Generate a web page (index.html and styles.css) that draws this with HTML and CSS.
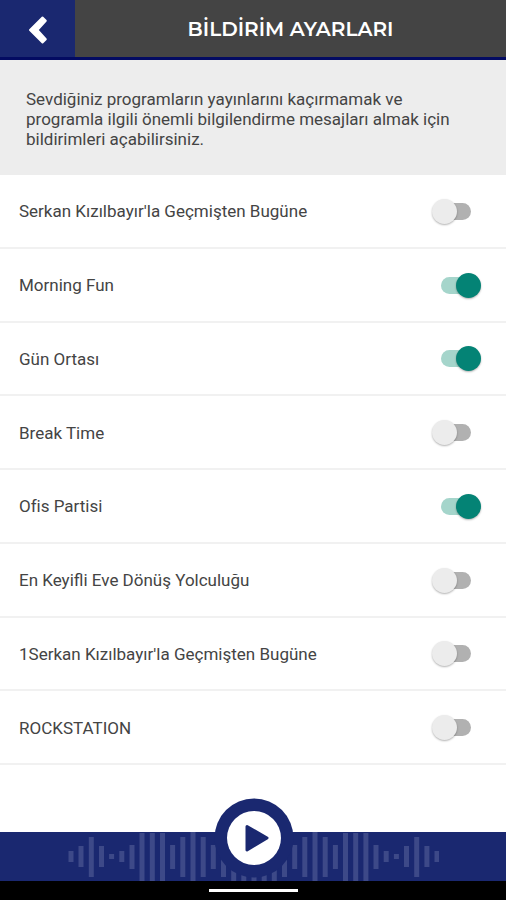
FILE: index.html
```html
<!DOCTYPE html>
<html lang="tr">
<head>
<meta charset="utf-8">
<meta name="viewport" content="width=device-width, initial-scale=1">
<title>Bildirim Ayarları</title>
<link rel="stylesheet" href="styles.css">
</head>
<body>
<div class="app">
  <header class="header">
    <button class="back" type="button" aria-label="Geri">
      <svg width="20" height="30" viewBox="0 0 20 30" aria-hidden="true"><path d="M14.500 2.500L17.800 5.800L9.400 15L17.800 24.200L14.500 27.500L2 15Z" fill="#fff" stroke="#fff" stroke-width="2" stroke-linejoin="round"/></svg>
    </button>
    <h1 class="title">BİLDİRİM AYARLARI</h1>
  </header>
  <main class="content">
    <p class="intro">Sevdiğiniz programların yayınlarını kaçırmamak ve programla ilgili önemli bilgilendirme mesajları almak için bildirimleri açabilirsiniz.</p>
    <ul class="list">
      <li class="row"><label class="name" for="p1">Serkan Kızılbayır'la Geçmişten Bugüne</label><input class="switch" type="checkbox" id="p1"></li>
      <li class="row"><label class="name" for="p2">Morning Fun</label><input class="switch" type="checkbox" id="p2" checked></li>
      <li class="row"><label class="name" for="p3">Gün Ortası</label><input class="switch" type="checkbox" id="p3" checked></li>
      <li class="row"><label class="name" for="p4">Break Time</label><input class="switch" type="checkbox" id="p4"></li>
      <li class="row"><label class="name" for="p5">Ofis Partisi</label><input class="switch" type="checkbox" id="p5" checked></li>
      <li class="row"><label class="name" for="p6">En Keyifli Eve Dönüş Yolculuğu</label><input class="switch" type="checkbox" id="p6"></li>
      <li class="row"><label class="name" for="p7">1Serkan Kızılbayır'la Geçmişten Bugüne</label><input class="switch" type="checkbox" id="p7"></li>
      <li class="row"><label class="name" for="p8">ROCKSTATION</label><input class="switch" type="checkbox" id="p8"></li>
    </ul>
  </main>
  <footer class="player">
    <svg class="wave" width="372" height="49" viewBox="67 832 372 49" aria-hidden="true">
      <path fill="none" stroke="#3d4988" stroke-width="5" d="M71 851v11M81 846v21M91.300 837v40M101.500 846v21M111.600 854v5M121.800 851v11M132 845v24M142 833v48M152.300 833v48M162.500 833v48M172.600 845v24M182.800 837v40M193 832v49M203.200 837v40M213.300 845v24M223.500 837v40M233.700 832v49M243.800 832v49M254 832v49M264.200 832v49M274.300 832v49M284.500 837v40M294.700 845v24M304.800 837v40M315 832v49M325.200 837v40M335.400 845v24M345.500 833v48M355.700 833v48M365.900 833v48M376 845v24M386.200 851v11M396.400 854v5M406.500 846v21M416.700 837v40M426.900 846v21M437 851v11"/>
    </svg>
    <button class="play" type="button" aria-label="Oynat">
      <svg width="80" height="80" viewBox="0 0 80 80" aria-hidden="true"><circle cx="40" cy="40" r="39.500" fill="#1a2870"/><circle cx="40" cy="40" r="27" fill="#fff"/><path d="M33 28.500L53 40L33 52Z" fill="#1a2870" stroke="#1a2870" stroke-width="3" stroke-linejoin="round"/></svg>
    </button>
  </footer>
  <div class="system"><span class="handle"></span></div>
</div>
</body>
</html>
```
FILE: styles.css
```css
* {
  box-sizing: border-box;
}

body {
  margin: 0;
  background: #fff;
  color: #444;
  font-family: Roboto, "Liberation Sans", sans-serif;
}

button {
  padding: 0;
  border: 0;
  background: none;
  cursor: pointer;
}

svg {
  display: block;
}

.app {
  display: flex;
  flex-direction: column;
  min-height: 100vh;
}

.header {
  display: flex;
  height: 60px;
  background: #444;
  border-bottom: 3px solid #030b62;
}

.back {
  display: flex;
  align-items: center;
  justify-content: center;
  width: 75px;
  padding-top: 3px;
  background: #1a2870;
}

.title {
  flex: 1;
  margin: 0;
  color: #fff;
  font: 600 20px/58px Montserrat, Inter, sans-serif;
  text-align: center;
}

.content {
  display: flex;
  flex: 1;
  flex-direction: column;
  padding-bottom: 67px;
}

.intro {
  margin: 0;
  padding: 29px 26px 26px;
  background: #ededed;
  font-size: 17px;
  line-height: 20px;
}

.list {
  display: flex;
  flex: 1;
  flex-direction: column;
  margin: 0;
  padding: 0;
  list-style: none;
}

.row {
  display: flex;
  flex: 1;
  align-items: center;
  justify-content: space-between;
  padding: 1px 25px 0 19px;
  border-bottom: 2px solid #f1f1f1;
}

.name {
  font-size: 17px;
  line-height: 20px;
}

.switch {
  display: flex;
  align-items: center;
  position: relative;
  width: 50px;
  height: 26px;
  margin: 0;
  appearance: none;
  cursor: pointer;
}

.switch::before {
  content: "";
  width: 30px;
  height: 17px;
  margin: 0 auto;
  border-radius: 9px;
  background: #b1b1b1;
}

.switch::after {
  content: "";
  position: absolute;
  left: 1px;
  width: 25px;
  height: 25px;
  border-radius: 50%;
  background: #ececec;
  box-shadow: 0 1px 2px rgba(0, 0, 0, 0.3);
}

.switch:checked::before {
  background: #a5d5cb;
}

.switch:checked::after {
  left: 25px;
  background: #048375;
}

.player {
  display: flex;
  justify-content: center;
  position: relative;
  height: 49px;
  background: #1a2870;
}

.play {
  position: absolute;
  top: -34px;
  left: calc(50% - 39px);
  border-radius: 50%;
}

.system {
  display: flex;
  align-items: center;
  justify-content: center;
  height: 19px;
  background: #000;
}

.handle {
  width: 89px;
  height: 3px;
  background: #fff;
}
```
